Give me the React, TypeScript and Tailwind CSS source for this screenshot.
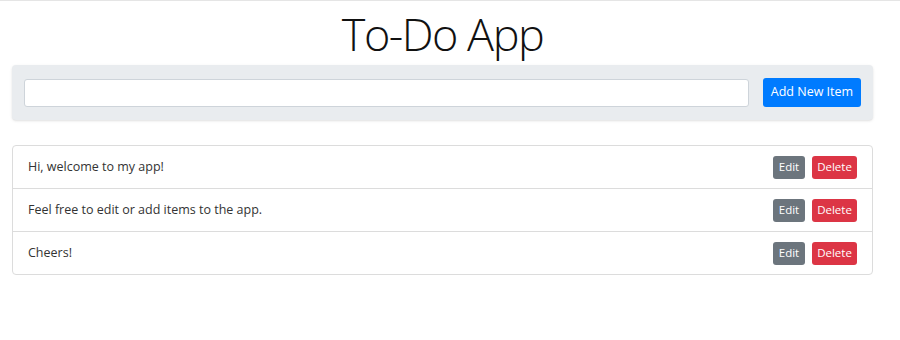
const items = [
  'Hi, welcome to my app!',
  'Feel free to edit or add items to the app.',
  'Cheers!',
]

export default function App() {
  return (
    <div
      className="min-h-[340px] bg-white border-t border-[#e5e5e5] text-[#212529]"
      style={{ fontFamily: '"Open Sans", "Noto Sans", sans-serif' }}
    >
      <h1 className="text-center pr-[15px] text-[45px] leading-[58px] font-light text-[#111] mt-[4px] tracking-[-1.5px]">
        To-Do App
      </h1>
      <div className="ml-[12px] w-[861px] mt-[2px] bg-[#e9ecef] rounded-[4px] shadow-sm px-[12px] py-[13px] flex items-center gap-[14px]">
        <input
          type="text"
          className="flex-1 h-[28px] bg-white border border-[#ced4da] rounded-[3px] px-2 text-[13px] outline-none"
        />
        <button className="h-[29px] w-[98px] bg-[#007bff] text-white text-[12.5px] rounded-[3px]">
          Add New Item
        </button>
      </div>
      <ul className="ml-[12px] w-[861px] mt-[25px] border border-[#dcdcdc] rounded-[4px]">
        {items.map((text, i) => (
          <li
            key={i}
            className={`flex items-center justify-between pl-[15px] pr-[15px] ${
              i > 0 ? 'h-[43px] border-t border-[#dcdcdc]' : 'h-[42px]'
            }`}
          >
            <span className="text-[12.5px] text-[#333] pt-[1px]">{text}</span>
            <div className="flex gap-[7px]">
              <button className="h-[23px] w-[32px] bg-[#6c757d] text-white text-[11.5px] rounded-[3px]">
                Edit
              </button>
              <button className="h-[23px] w-[45px] bg-[#dc3545] text-white text-[11.5px] rounded-[3px]">
                Delete
              </button>
            </div>
          </li>
        ))}
      </ul>
    </div>
  )
}
